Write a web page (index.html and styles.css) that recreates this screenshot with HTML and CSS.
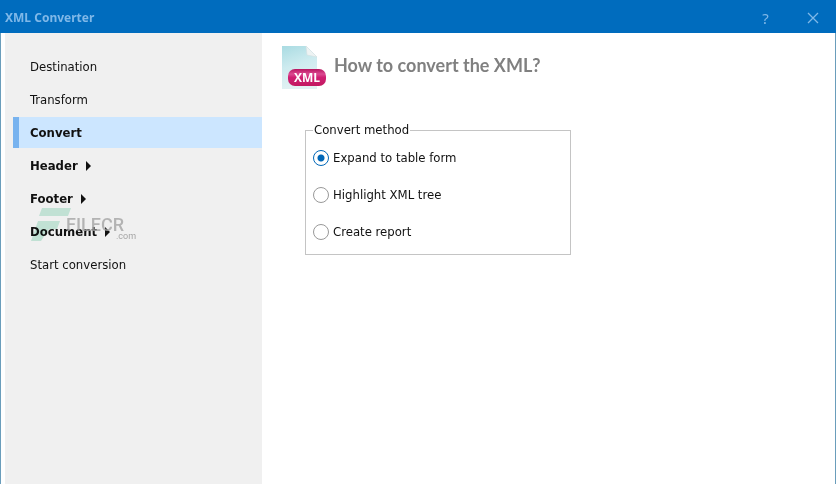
FILE: index.html
```
<!DOCTYPE html>
<html lang="en">
<head>
	<meta charset="UTF-8">
	<title>XML Converter</title>
	<link rel="stylesheet" href="styles.css">
</head>
<body>
	<div class="window">
		<header class="titlebar">
			<span class="caption">XML Converter</span>
			<button type="button" class="winbtn" aria-label="Help">?</button>
			<button type="button" class="winbtn" aria-label="Close">
				<svg width="12" height="12" viewBox="0 0 12 12"><path d="M1 1L11 11M11 1L1 11" fill="none" stroke="currentColor" stroke-width="1.3"/></svg>
			</button>
		</header>

		<div class="content">
			<nav class="steps">
				<ul>
					<li><a href="#">Destination</a></li>
					<li><a href="#">Transform</a></li>
					<li class="selected"><a href="#">Convert</a></li>
					<li class="group"><a href="#">Header</a></li>
					<li class="group"><a href="#">Footer</a></li>
					<li class="group"><a href="#">Document</a></li>
					<li><a href="#">Start conversion</a></li>
				</ul>
				<!-- logo over the menu -->
				<div class="watermark">
					<svg width="40" height="34" viewBox="0 0 40 34"><path d="M11 0H40L37 8H8ZM7 13H29L26 21H18L10 33H0Z" fill="#cdf0e2"/></svg>
					<span class="brand">FILECR</span>
					<span class="domain">.com</span>
				</div>
			</nav>

			<main class="page">
				<div class="heading">
					<svg width="46" height="46" viewBox="0 0 46 46">
						<defs>
							<linearGradient id="paper" x1="0" y1="0" x2="0.3" y2="1">
								<stop offset="0" stop-color="#a9dbe2"/>
								<stop offset="0.5" stop-color="#cdebef"/>
								<stop offset="1" stop-color="#e3f1f3"/>
							</linearGradient>
							<linearGradient id="badge" x1="0" y1="0" x2="0" y2="1">
								<stop offset="0" stop-color="#b81560"/>
								<stop offset="0.3" stop-color="#dc4a92"/>
								<stop offset="0.5" stop-color="#cf1f73"/>
								<stop offset="1" stop-color="#c2185f"/>
							</linearGradient>
						</defs>
						<path d="M1 1H25L36 12V44H1Z" fill="url(#paper)"/>
						<path d="M25 1L36 12L26 10Z" fill="#eef3f3" stroke="#d3dfe0" stroke-width="0.6"/>
						<rect x="7" y="24" width="38" height="17" rx="7" fill="url(#badge)"/>
						<text x="26" y="37" text-anchor="middle" class="badgetext">XML</text>
					</svg>
					<h1>How to convert the XML?</h1>
				</div>

				<fieldset>
					<legend>Convert method</legend>
					<label><input type="radio" name="method" checked>Expand to table form</label>
					<label><input type="radio" name="method">Highlight XML tree</label>
					<label><input type="radio" name="method">Create report</label>
				</fieldset>
			</main>
		</div>
	</div>
</body>
</html>
```
FILE: styles.css
```
*{margin: 0;padding: 0;box-sizing: border-box;}
body{font: 13px/16px "DejaVu Sans Condensed", "DejaVu Sans", sans-serif;color: #111;background: #fff;}
.window{min-height: 100vh;display: flex;flex-direction: column;}

.titlebar{height: 33px;flex: none;display: flex;align-items: center;padding: 2px 0 0 5px;background: #006cbe;color: #7fb8e8;}
.caption{flex: 1;font: bold 12px "Noto Sans", sans-serif;}
.winbtn{width: 47px;height: 31px;border: 0;background: none;color: #7fb8e8;font: 15px "Noto Sans", sans-serif;display: flex;align-items: center;justify-content: center;}

.content{flex: 1;display: flex;border: solid #6a9dbb;border-width: 0 1px;}
.steps{position: relative;flex: none;width: 257px;margin-left: 4px;padding-top: 18px;background: #f0f0f0;}
.steps ul{list-style: none;}
.steps li{height: 31px;margin: 0 0 2px 8px;}
.steps a{display: flex;align-items: center;height: 31px;padding-left: 17px;color: #111;text-decoration: none;}
.steps .selected{border-left: 6px solid #78b3ef;background: #cce6ff;}
.steps .selected a{padding-left: 11px;font-weight: bold;}
.steps .group a{font-weight: bold;}
.steps .group a::after{content: "";margin-left: 8px;border: solid transparent;border-width: 5px 0 5px 5px;border-left-color: #111;}

.watermark{position: absolute;left: 26px;top: 175px;display: flex;pointer-events: none;color: #a5a5a5;font-family: Roboto, sans-serif;}
.watermark svg{mix-blend-mode: multiply;}
.brand{margin-left: -5px;padding-top: 9px;font-size: 18px;font-weight: 500;opacity: .8;}
.domain{align-self: flex-end;margin-left: -8px;font-size: 9px;line-height: 12px;}

.page{flex: 1;padding: 12px 19px;}
.heading{display: flex;align-items: flex-start;gap: 7px;}
.heading h1{padding-top: 8px;font: bold 18px/24px Lato, sans-serif;color: #808080;}
.badgetext{font: bold 12px "Open Sans", sans-serif;fill: #fff;}

fieldset{width: 266px;margin: 31px 0 0 24px;padding: 1px 7px 4px;border: 1px solid #c4c4c4;}
legend{padding: 0 1px;}
fieldset label{display: flex;align-items: center;gap: 4px;height: 37px;}
fieldset input{appearance: none;width: 16px;height: 16px;border: 1px solid #999;border-radius: 50%;background: #fff;}
fieldset input:checked{border-color: #0067b8;background: radial-gradient(circle, #0067b8 3px, #fff 4px);}
```
